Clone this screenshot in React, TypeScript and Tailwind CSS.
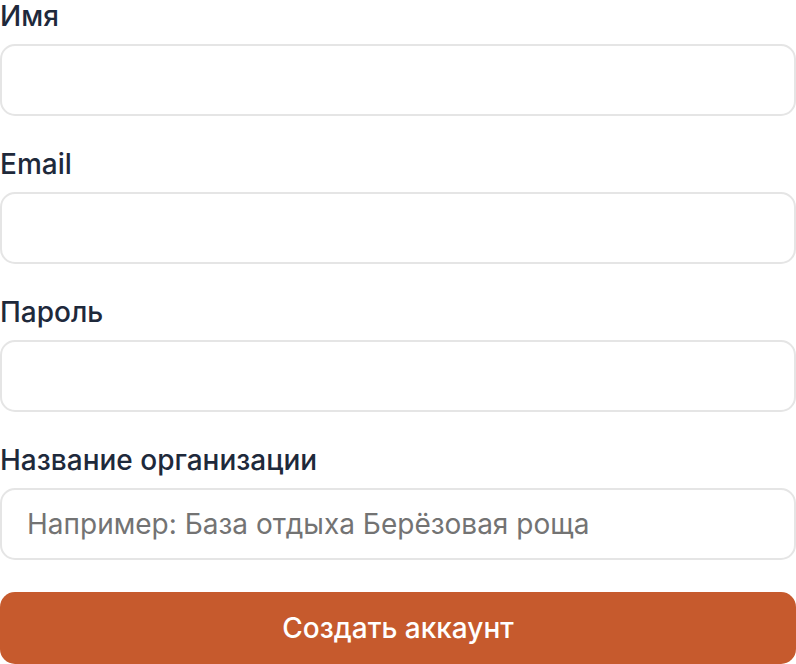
import React from "react";

const fields = [
  { label: "Имя", type: "text", placeholder: "" },
  { label: "Email", type: "email", placeholder: "" },
  { label: "Пароль", type: "password", placeholder: "" },
  { label: "Название организации", type: "text", placeholder: "Например: База отдыха Берёзовая роща" },
];

export default function App() {
  return (
    <div className="w-[796px] bg-white" style={{ fontFamily: "Inter, 'Noto Sans', sans-serif" }}>
      <form className="flex flex-col">
        {fields.map((f) => (
          <div key={f.label} className="flex flex-col mb-[32px]">
            <label className="text-[28px] leading-[32px] font-medium text-[#1e293b] mb-[12px]">{f.label}</label>
            <input
              type={f.type}
              placeholder={f.placeholder}
              className="h-[72px] w-full rounded-[15px] border-2 border-[#e5e5e5] bg-white px-[25px] text-[28px] text-[#1e293b] placeholder:text-[#737373] outline-none"
            />
          </div>
        ))}
        <button
          type="button"
          className="h-[72px] w-full rounded-[15px] bg-[#c65a2d] text-[28px] font-medium text-white"
        >
          Создать аккаунт
        </button>
      </form>
    </div>
  );
}
